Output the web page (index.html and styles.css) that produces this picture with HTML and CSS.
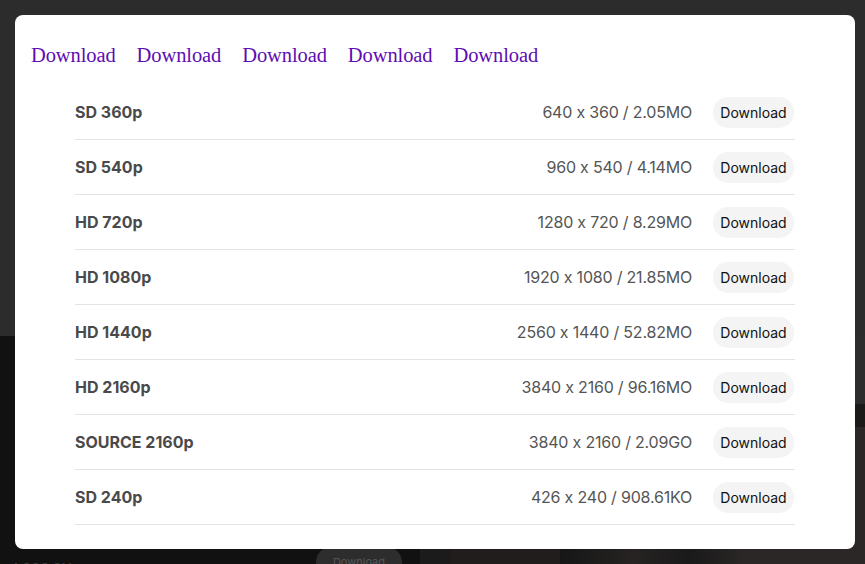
FILE: index.html
```html
<!DOCTYPE html>
<html lang="fr">
<head>
<meta charset="utf-8">
<title>Download</title>
<link rel="stylesheet" href="styles.css">
</head>
<body>
<div class="page">
  <header class="page-top"></header>
  <section class="page-grid">
    <div class="card">
      <span class="card-title">LSSS 2H</span>
      <span class="ghost-btn">Download</span>
    </div>
    <div class="thumb t1"></div>
    <div class="thumb t2"></div>
    <div class="thumb t3"></div>
    <div class="thumb t4"></div>
  </section>
</div>

<div class="modal">
  <nav class="links">
    <a href="#">Download</a>
    <a href="#">Download</a>
    <a href="#">Download</a>
    <a href="#">Download</a>
    <a href="#">Download</a>
  </nav>
  <ul class="list">
    <li class="row"><span class="label">SD 360p</span><span class="spec">640 x 360 / 2.05MO</span><button class="btn">Download</button></li>
    <li class="row"><span class="label">SD 540p</span><span class="spec">960 x 540 / 4.14MO</span><button class="btn">Download</button></li>
    <li class="row"><span class="label">HD 720p</span><span class="spec">1280 x 720 / 8.29MO</span><button class="btn">Download</button></li>
    <li class="row"><span class="label">HD 1080p</span><span class="spec">1920 x 1080 / 21.85MO</span><button class="btn">Download</button></li>
    <li class="row"><span class="label">HD 1440p</span><span class="spec">2560 x 1440 / 52.82MO</span><button class="btn">Download</button></li>
    <li class="row"><span class="label">HD 2160p</span><span class="spec">3840 x 2160 / 96.16MO</span><button class="btn">Download</button></li>
    <li class="row"><span class="label">SOURCE 2160p</span><span class="spec">3840 x 2160 / 2.09GO</span><button class="btn">Download</button></li>
    <li class="row"><span class="label">SD 240p</span><span class="spec">426 x 240 / 908.61KO</span><button class="btn">Download</button></li>
  </ul>
</div>
</body>
</html>
```

FILE: styles.css
```css
* { box-sizing: border-box; }
html, body {
  margin: 0;
  padding: 0;
  width: 865px;
  height: 564px;
  overflow: hidden;
  background: #111111;
  font-family: Inter, "Noto Sans", sans-serif;
  font-feature-settings: "calt" 0;
}
.page {
  display: flex;
  flex-direction: column;
}
.page-top {
  height: 336px;
  background: #2c2c2c;
}
.page-grid {
  display: grid;
  grid-template-columns: 420px 30px 110px 185px 1fr;
  height: 228px;
  background: #111111;
}
.card {
  display: flex;
  align-items: flex-end;
  justify-content: space-between;
  padding: 0 18px 0 14px;
  transform: translateY(13px);
}
.card-title {
  color: #3a3a3a;
  font-size: 14px;
  font-weight: 600;
  line-height: 16px;
}
.ghost-btn {
  background: #2d2d2d;
  color: #555;
  font-size: 11px;
  line-height: 30px;
  height: 30px;
  padding: 0 17px;
  border-radius: 15px;
}
.thumb { height: 100%; }
.t1 { background: #1b1b1b; }
.t2 { background: #211d1c; }
.t3 { background: linear-gradient(90deg, #161616, #262322 40%, #1a1a1a 70%, #2a2726); }
.t4 { background: linear-gradient(180deg, #2d2d2d 0 30%, #1c1a19 30% 40%, #2a2726 40%); }

.modal {
  position: fixed;
  left: 15px;
  top: 15px;
  width: 840px;
  height: 534px;
  background: #ffffff;
  border-radius: 8px;
  padding: 26px 16px 0 16px;
}
.links {
  display: flex;
  gap: 21px;
  height: 44px;
}
.links a {
  font-family: "Liberation Serif", "DejaVu Serif", serif;
  font-size: 20.5px;
  line-height: 28px;
  color: #5e0db3;
  text-decoration: none;
  letter-spacing: -0.1px;
}
.list {
  list-style: none;
  margin: 0 44px;
  padding: 0;
}
.row {
  display: flex;
  align-items: center;
  height: 55px;
  border-bottom: 1px solid #e3e3e3;
}
.label {
  flex: 1;
  font-size: 16px;
  font-weight: 700;
  color: #4a4a4a;
}
.spec {
  font-size: 16px;
  color: #555555;
  margin-right: 21px;
  letter-spacing: -0.2px;
}
.btn {
  font-family: Inter, "Noto Sans", sans-serif;
  font-feature-settings: "calt" 0;
  font-size: 14px;
  color: #111111;
  background: #f4f4f4;
  border: none;
  border-radius: 15px;
  height: 31px;
  padding: 0 6px;
  width: 81px;
  margin-right: 1px;
}
```
